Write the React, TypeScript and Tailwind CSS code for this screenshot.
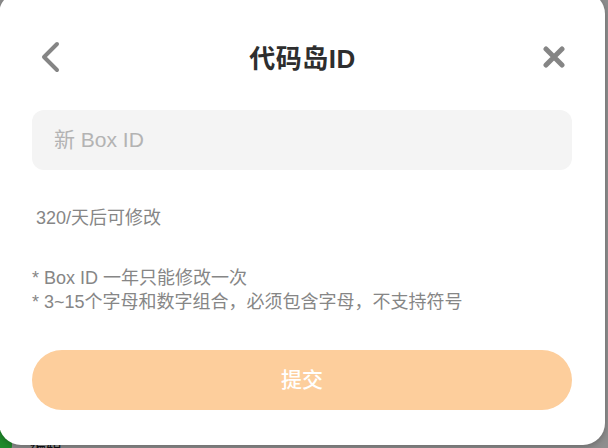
export default function App() {
  const font = '"Liberation Sans", "Noto Sans CJK SC", sans-serif';
  return (
    <div
      className="relative w-[608px] h-[448px] overflow-hidden bg-[#8e8e8e]"
      style={{ fontFamily: font }}
    >
      {/* page content under the dim overlay */}
      <div className="absolute left-[-14px] top-[418px] w-[26px] h-[40px] rounded-full bg-[#1f8a2a]" />
      <div className="absolute left-[30px] top-[436px] text-[16px] text-[#111]">编辑</div>

      <div className="absolute left-[-1px] top-[-8px] w-[606px] h-[453px] rounded-[22px] bg-white px-[33px] shadow-[0_2px_6px_rgba(0,0,0,0.25)]">
        <div className="flex items-center justify-between h-[50px] mt-[40px]">
          <button className="w-[30px] h-[32px] flex items-center ml-[8px]">
            <svg width="20" height="32" viewBox="0 0 20 32" fill="none">
              <path
                d="M17 3 L4 16 L17 29"
                stroke="#858585"
                strokeWidth="4"
                strokeLinecap="round"
                strokeLinejoin="round"
              />
            </svg>
          </button>
          <h1 className="text-[26px] font-bold text-[#2e2e2e] mt-[5px] tracking-[0.5px]">
            代码岛ID
          </h1>
          <button className="w-[30px] h-[30px] flex items-center justify-end mr-[7px]">
            <svg width="22" height="22" viewBox="0 0 22 22" fill="none">
              <path
                d="M3 3 L19 19 M19 3 L3 19"
                stroke="#858585"
                strokeWidth="5"
                strokeLinecap="round"
              />
            </svg>
          </button>
        </div>

        <input
          className="mt-[28px] w-full h-[60px] rounded-[12px] bg-[#f4f4f4] pl-[22px] text-[21px] text-[#333] outline-none placeholder:text-[#b3b3b3]"
          style={{ fontFamily: font }}
          placeholder="新 Box ID"
        />

        <p className="mt-[36px] pl-[4px] text-[18px] leading-[24px] text-[#868686]">
          320/天后可修改
        </p>

        <div className="mt-[36px] text-[18px] leading-[24px] text-[#868686]">
          <p>* Box ID 一年只能修改一次</p>
          <p>* 3~15个字母和数字组合，必须包含字母，不支持符号</p>
        </div>

        <button className="mt-[36px] w-full h-[60px] rounded-full bg-[#fdce9c] text-white text-[21px] font-medium">
          提交
        </button>
      </div>
    </div>
  );
}
